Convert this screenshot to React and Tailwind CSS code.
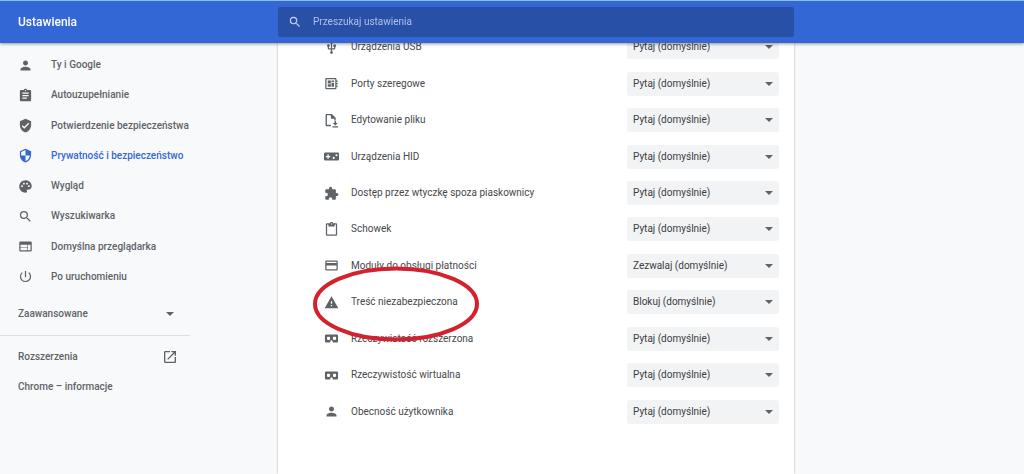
import {
  MdPerson, MdAssignment, MdVerifiedUser, MdSecurity, MdPalette, MdSearch, MdWeb,
  MdPowerSettingsNew, MdOpenInNew, MdUsb, MdDeveloperBoard, MdExtension,
  MdContentPaste, MdCreditCard, MdWarning,
} from "react-icons/md";

function FileEditIcon(props) {
  return (
    <svg viewBox="0 0 24 24" fill="currentColor" aria-hidden="true" {...props}>
      <path d="M12.500 1.500H4.500c-1.100 0-2 .9-2 2v15.500c0 1.100.9 2 2 2H11v-2.200H4.700V3.700H11V9h5.500v2.500h2.200V7.500z" />
      <path d="M16.800 12.500h2.400v3.300h3L18 20l-4.200-4.200h3zM13.500 21h9v2.200h-9z" />
    </svg>
  );
}

function GamepadIcon(props) {
  return (
    <svg viewBox="0 0 24 24" fill="currentColor" aria-hidden="true" {...props}>
      <path
        fillRule="evenodd"
        d="M2 5.500h20a2 2 0 0 1 2 2v9a2 2 0 0 1-2 2H2a2 2 0 0 1-2-2v-9a2 2 0 0 1 2-2zM5.500 8.500v2.500H3v2h2.500v2.500h2V13H10v-2H7.500V8.500zM15.500 12.500a1.700 1.700 0 1 0 0 3.400 1.700 1.700 0 0 0 0-3.400zM20 8.300a1.700 1.700 0 1 0 0 3.400 1.700 1.700 0 0 0 0-3.400z"
      />
    </svg>
  );
}

function HeadsetIcon(props) {
  return (
    <svg viewBox="0 0 24 24" fill="currentColor" aria-hidden="true" {...props}>
      <path
        fillRule="evenodd"
        d="M3.500 5.500h17a2 2 0 0 1 2 2v9a2 2 0 0 1-2 2h-4.800c-.8 0-1.400-.4-1.700-1.100l-.9-2.100c-.4-.9-1.800-.9-2.200 0l-.9 2.100c-.3.700-.9 1.100-1.700 1.100H3.500a2 2 0 0 1-2-2v-9a2 2 0 0 1 2-2zM6 9a1.300 1.300 0 0 0-1.300 1.300v2.600A1.300 1.300 0 0 0 6 14.200h2.400a1.300 1.300 0 0 0 1.300-1.300v-2.600A1.300 1.300 0 0 0 8.400 9zM15.600 9a1.300 1.300 0 0 0-1.300 1.300v2.600a1.300 1.300 0 0 0 1.300 1.300H18a1.300 1.300 0 0 0 1.300-1.300v-2.600A1.300 1.300 0 0 0 18 9z"
      />
    </svg>
  );
}

function Caret({ className = "" }) {
  return (
    <svg viewBox="0 0 8 4" fill="currentColor" aria-hidden="true" className={`h-1 w-2 ${className}`}>
      <path d="M0 0h8L4 4z" />
    </svg>
  );
}

const menu = [
  { label: "Ty i Google", Icon: MdPerson },
  { label: "Autouzupełnianie", Icon: MdAssignment },
  { label: "Potwierdzenie bezpieczeństwa", Icon: MdVerifiedUser },
  { label: "Prywatność i bezpieczeństwo", Icon: MdSecurity, active: true },
  { label: "Wygląd", Icon: MdPalette },
  { label: "Wyszukiwarka", Icon: MdSearch },
  { label: "Domyślna przeglądarka", Icon: MdWeb },
  { label: "Po uruchomieniu", Icon: MdPowerSettingsNew },
];

const options = ["Pytaj (domyślnie)", "Zezwalaj (domyślnie)", "Blokuj (domyślnie)"];

const permissions = [
  { id: "usb", label: "Urządzenia USB", Icon: MdUsb, value: options[0] },
  { id: "serial", label: "Porty szeregowe", Icon: MdDeveloperBoard, value: options[0] },
  { id: "files", label: "Edytowanie pliku", Icon: FileEditIcon, value: options[0] },
  { id: "hid", label: "Urządzenia HID", Icon: GamepadIcon, value: options[0] },
  { id: "plugin", label: "Dostęp przez wtyczkę spoza piaskownicy", Icon: MdExtension, value: options[0] },
  { id: "clipboard", label: "Schowek", Icon: MdContentPaste, value: options[0] },
  { id: "payment", label: "Moduły do obsługi płatności", Icon: MdCreditCard, value: options[1] },
  { id: "insecure", label: "Treść niezabezpieczona", Icon: MdWarning, value: options[2], marked: true },
  { id: "ar", label: "Rzeczywistość rozszerzona", Icon: HeadsetIcon, value: options[0] },
  { id: "vr", label: "Rzeczywistość wirtualna", Icon: HeadsetIcon, value: options[0] },
  { id: "idle", label: "Obecność użytkownika", Icon: MdPerson, value: options[0] },
];

function Header() {
  return (
    <header className="fixed inset-x-0 top-0 z-20 grid h-[43px] grid-cols-[278px_minmax(0,516px)_1fr] items-center border-t border-[#8bbcf3] bg-[#3367d6] shadow-[0_1px_3px_rgba(0,0,0,0.4)]">
      <h1 className="pl-[18px] text-xs font-medium text-white">Ustawienia</h1>
      <label className="flex h-[30px] items-center gap-[11px] rounded-xs bg-[#2850a7] pl-[10px] text-[#c3d2f2]">
        <MdSearch className="size-[14px]" />
        <input
          type="search"
          aria-label="Przeszukaj ustawienia"
          placeholder="Przeszukaj ustawienia"
          className="min-w-0 flex-1 bg-transparent outline-none placeholder:text-[#adc0ea] placeholder:opacity-100"
        />
      </label>
    </header>
  );
}

function Sidebar() {
  return (
    <nav className="w-[190px] pt-[50px] font-medium text-[#5f6368]">
      <ul className="grid h-[242px] auto-rows-fr">
        {menu.map(({ label, Icon, active }) => (
          <li key={label} className="flex">
            <a
              href="#"
              aria-current={active ? "page" : undefined}
              className={`flex flex-1 items-center gap-[18px] pl-[18px] whitespace-nowrap ${active ? "text-[#3367d6]" : ""}`}
            >
              <Icon className="size-[15px] shrink-0" />
              {label}
            </a>
          </li>
        ))}
      </ul>
      <button type="button" className="flex h-[43px] w-full items-center justify-between pr-4 pl-[18px]">
        Zaawansowane
        <Caret />
      </button>
      <div className="border-t border-[#dddfe3] pt-[6px]">
        <a href="#" className="flex h-[30px] items-center justify-between pr-3 pl-[18px]">
          Rozszerzenia
          <MdOpenInNew className="size-4" />
        </a>
        <a href="#" className="flex h-[30px] items-center pl-[18px]">
          Chrome – informacje
        </a>
      </div>
    </nav>
  );
}

function Permission({ id, label, Icon, value, marked }) {
  return (
    <li className="relative flex items-center pr-[15px] pl-[46px]">
      <Icon className="size-[15px] shrink-0 text-[#5f6368]" />
      <label htmlFor={id} className="min-w-0 flex-1 pl-3 whitespace-nowrap">
        {label}
      </label>
      <div className="relative flex w-[152px] items-center">
        <select
          id={id}
          defaultValue={value}
          className="h-6 w-full appearance-none rounded-[3px] bg-[#f1f3f4] pl-[6px] text-[#3c4043]"
        >
          {options.map((option) => (
            <option key={option}>{option}</option>
          ))}
        </select>
        <Caret className="pointer-events-none absolute right-[6px] text-[#5f6368]" />
      </div>
      {marked && (
        <svg
          viewBox="0 0 166 76"
          fill="none"
          aria-hidden="true"
          className="pointer-events-none absolute -top-[18px] left-[35px] z-10 h-[76px] w-[166px]"
        >
          <ellipse cx="83" cy="38" rx="81" ry="35.500" stroke="#d3222e" strokeWidth="4" />
        </svg>
      )}
    </li>
  );
}

export default function App() {
  return (
    <div className="min-h-screen bg-[#f8f9fb] font-[Roboto,sans-serif] text-[10px] leading-4">
      <Header />
      <div className="grid min-h-screen grid-cols-[278px_minmax(0,516px)_1fr]">
        <Sidebar />
        <main className="bg-white pt-[29px] pb-11 text-[#46494c] shadow-[0_0_2px_rgba(60,64,67,0.4)]">
          <ul className="grid h-[401px] auto-rows-fr">
            {permissions.map((item) => (
              <Permission key={item.id} {...item} />
            ))}
          </ul>
        </main>
      </div>
    </div>
  );
}
